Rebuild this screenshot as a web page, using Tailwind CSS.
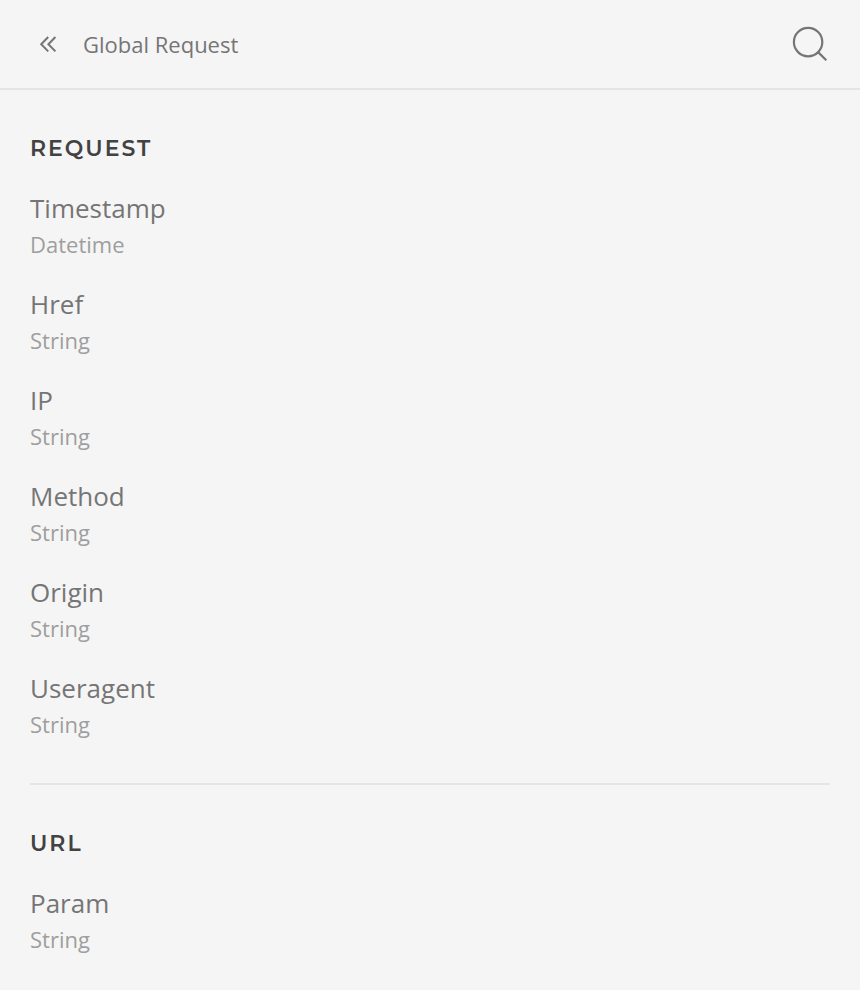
<!DOCTYPE html>
<html lang="en"><head><meta charset="utf-8"><title>Global Request</title>
<script src="https://cdn.jsdelivr.net/npm/@tailwindcss/browser@4"></script></head>
<body class="h-[990px] overflow-hidden bg-[#f5f5f5] font-['Open_Sans',sans-serif] text-[#757575]">
<header class="flex h-[90px] items-center border-b-2 border-[#e4e4e4] pr-8 pl-[39px]">
<svg class="h-[18px] w-[18px]" viewBox="0 0 18 18" fill="none" stroke="#757575" stroke-width="2"><path d="M9.2 2 2.2 9.2 9.2 16.4M16.4 2 9.4 9.2 16.4 16.4"/></svg>
<h1 class="ml-[26px] text-[22px] leading-[30px]">Global Request</h1>
<svg class="ml-auto h-9 w-9" viewBox="0 0 36 36" fill="none" stroke="#757575" stroke-width="2.2"><circle cx="16.1" cy="16.1" r="14.2"/><path d="m26.1 26.1 8.2 8.2"/></svg>
</header>
<main class="px-[30px]">
<section class="h-[695px] border-b-2 border-[#e4e4e4] pt-[45px]">
<h2 class="font-['Montserrat','Open_Sans',sans-serif] text-[22px] leading-7 font-semibold tracking-[2px] text-[#424242]">REQUEST</h2>
<dl class="mt-[27px] flex flex-col gap-6">
<div><dt class="text-[26px] leading-9">Timestamp</dt><dd class="text-[22px] leading-9 text-[#9e9e9e]">Datetime</dd></div>
<div><dt class="text-[26px] leading-9">Href</dt><dd class="text-[22px] leading-9 text-[#9e9e9e]">String</dd></div>
<div><dt class="text-[26px] leading-9">IP</dt><dd class="text-[22px] leading-9 text-[#9e9e9e]">String</dd></div>
<div><dt class="text-[26px] leading-9">Method</dt><dd class="text-[22px] leading-9 text-[#9e9e9e]">String</dd></div>
<div><dt class="text-[26px] leading-9">Origin</dt><dd class="text-[22px] leading-9 text-[#9e9e9e]">String</dd></div>
<div><dt class="text-[26px] leading-9">Useragent</dt><dd class="text-[22px] leading-9 text-[#9e9e9e]">String</dd></div>
</dl></section>
<section class="pt-[45px]">
<h2 class="font-['Montserrat','Open_Sans',sans-serif] text-[22px] leading-7 font-semibold tracking-[2px] text-[#424242]">URL</h2>
<dl class="mt-[27px]"><div><dt class="text-[26px] leading-9">Param</dt><dd class="text-[22px] leading-9 text-[#9e9e9e]">String</dd></div></dl>
</section>
</main></body></html>
